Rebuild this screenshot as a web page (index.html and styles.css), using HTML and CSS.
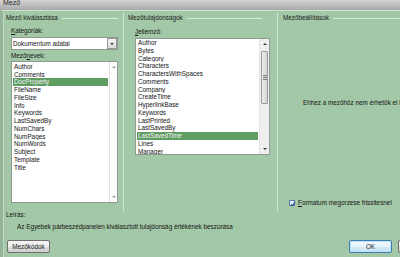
FILE: index.html
```html
<!DOCTYPE html>
<html lang="hu">
<head>
<meta charset="utf-8">
<title>Mező</title>
<link rel="stylesheet" href="styles.css">
</head>
<body>
<div class="titlebar"><span class="title">Mező</span></div>
<div class="frame">
  <div class="main">
    <section class="col col1">
      <div class="head"><span>Mező kiválasztása</span><i class="rule"></i></div>
      <div class="label lbl-kat"><u>K</u>ategóriák:</div>
      <div class="combo">
        <span class="combo-text">Dokumentum adatai</span>
        <span class="combo-btn"><i class="tri-down dark"></i></span>
      </div>
      <div class="label lbl-nev">Mező<u>n</u>evek:</div>
      <div class="listbox list-left">
        <div class="items">
          <div class="item">Author</div>
          <div class="item">Comments</div>
          <div class="item sel">DocProperty</div>
          <div class="item">FileName</div>
          <div class="item">FileSize</div>
          <div class="item">Info</div>
          <div class="item">Keywords</div>
          <div class="item">LastSavedBy</div>
          <div class="item">NumChars</div>
          <div class="item">NumPages</div>
          <div class="item">NumWords</div>
          <div class="item">Subject</div>
          <div class="item">Template</div>
          <div class="item">Title</div>
        </div>
        <div class="vscroll disabled">
          <span class="arrow"><i class="tri-up"></i></span>
          <span class="track"></span>
          <span class="arrow"><i class="tri-down"></i></span>
        </div>
      </div>
    </section>
    <section class="col col2">
      <div class="head head2"><span>Mezőtulajdonságok</span><i class="rule"></i></div>
      <div class="label lbl-jel"><u>J</u>ellemző:</div>
      <div class="listbox list-mid">
        <div class="items">
          <div class="item">Author</div>
          <div class="item">Bytes</div>
          <div class="item">Category</div>
          <div class="item">Characters</div>
          <div class="item">CharactersWithSpaces</div>
          <div class="item">Comments</div>
          <div class="item">Company</div>
          <div class="item">CreateTime</div>
          <div class="item">HyperlinkBase</div>
          <div class="item">Keywords</div>
          <div class="item">LastPrinted</div>
          <div class="item">LastSavedBy</div>
          <div class="item sel">LastSavedTime</div>
          <div class="item">Lines</div>
          <div class="item">Manager</div>
        </div>
        <div class="vscroll active">
          <span class="arrow"><i class="tri-up dark"></i></span>
          <span class="track"><span class="thumb"><i class="grip"></i></span></span>
          <span class="arrow"><i class="tri-down dark"></i></span>
        </div>
      </div>
    </section>
    <section class="col col3">
      <div class="head"><span>Mezőbeállítások</span><i class="rule"></i></div>
      <div class="nosettings">Ehhez a mezőhöz nem érhetők el beállítások</div>
      <label class="check">
        <span class="box"><svg width="6" height="6" viewBox="0 0 6 6"><path d="M1 3.2 L2.4 4.6 L5 1.2" fill="none" stroke="#1f4f8f" stroke-width="1.1"/></svg></span>
        <span><u>F</u>ormatum megorzese frissitesnel</span>
      </label>
    </section>
  </div>
  <div class="desc-label">Leírás:</div>
  <div class="desc">Az Egyebek párbeszédpanelen kiválasztott tulajdonság értékének beszúrása</div>
  <div class="buttons">
    <button class="btn">Mezőkódok</button>
    <div class="btn-group">
      <button class="btn btn-ok">OK</button>
      <button class="btn">Mégse</button>
    </div>
  </div>
</div>
</body>
</html>
```

FILE: styles.css
```css
* { box-sizing: border-box; }
html, body { margin: 0; padding: 0; }
body {
  width: 400px;
  height: 257px;
  overflow: hidden;
  background: #a3c8a7;
  font-family: "Liberation Sans", Arial, sans-serif;
  font-size: 6.35px;
  color: #141414;
}
u { text-decoration: underline; text-underline-offset: 0.5px; }

.titlebar {
  height: 10px;
  background: linear-gradient(#d2d2d2, #a9a9a9);
  padding-left: 3px;
  overflow: hidden;
}
.title {
  display: block;
  margin-top: -1.5px;
  line-height: 8px;
  font-size: 7px;
  color: #2a2a2a;
}

.frame {
  height: 247px;
  border-left: 3px solid #95b59a;
  border-top: 1px solid #cfe2d1;
  box-shadow: inset 1px 0 0 #c2dac5;
}

.main {
  display: flex;
  height: 198px;
  margin-top: 2px;
}
.col { padding-top: 1px; display: flex; flex-direction: column; }
.col1 { width: 120px; padding-left: 3px; padding-right: 5px; }
.col2 { width: 154px; padding-left: 4px; padding-right: 7px; border-left: 1px solid #d3e6d5; }
.col3 { flex: 1; padding-left: 5px; border-left: 1px solid #d3e6d5; overflow: hidden; }

.head {
  display: flex;
  align-items: center;
  gap: 4px;
  height: 8px;
  line-height: 8px;
  white-space: nowrap;
  color: #202020;
}
.head2 { margin-right: 8px; }
.rule { flex: 1; height: 1px; background: #d6e8d8; }

.label { line-height: 8px; height: 8px; white-space: nowrap; }
.col1 .label, .col1 .combo, .col1 .listbox { margin-left: 5px; }
.lbl-kat { margin-top: 5px; }
.lbl-nev { margin-top: 2px; }
.col2 .label, .col2 .listbox { margin-left: 7px; }
.lbl-jel { margin-top: 5.5px; }

.combo {
  margin-top: 2px;
  height: 13px;
  background: #fff;
  border: 1px solid #8d9a8f;
  display: flex;
  align-items: center;
}
.combo-text { flex: 1; padding-left: 1px; line-height: 8px; }
.combo-btn {
  width: 10px;
  height: 11px;
  border: 1px solid #9a9a9a;
  background: linear-gradient(#f6f6f6, #dadada);
  display: flex;
  align-items: center;
  justify-content: center;
}

.tri-down, .tri-up {
  display: block;
  width: 0; height: 0;
  border-left: 2px solid transparent;
  border-right: 2px solid transparent;
}
.tri-down { border-top: 2px solid #9a9a9a; }
.tri-up { border-bottom: 2px solid #9a9a9a; }
.tri-down.dark { border-top-color: #3a3a3a; }
.tri-up.dark { border-bottom-color: #3a3a3a; }

.listbox {
  background: #fff;
  border: 1px solid #8d9a8f;
  display: flex;
  overflow: hidden;
}
.list-left { margin-top: 1px; height: 142px; }
.list-mid { margin-top: 2.2px; height: 117.5px; }
.items { flex: 1; padding: 0.8px 1px; min-width: 0; }
.list-mid .items { padding-top: 0.4px; }
.item {
  height: 7.75px;
  line-height: 7.75px;
  padding-left: 1px;
  white-space: nowrap;
  overflow: hidden;
}
.item.sel { background: #5f9d63; color: #f2f2f2; }

.vscroll {
  display: flex;
  flex-direction: column;
  border-left: 1px solid #e2e2e2;
}
.list-left .vscroll { width: 8px; background: #fdfdfd; }
.list-mid .vscroll { width: 10px; background: #efefef; }
.arrow {
  height: 10px;
  display: flex;
  align-items: center;
  justify-content: center;
}
.track { flex: 1; }
.list-mid .track { padding-top: 2px; }
.thumb {
  display: flex;
  align-items: center;
  justify-content: center;
  margin: 0 1px;
  height: 53px;
  border: 1px solid #9a9a9a;
  border-radius: 1px;
  background: linear-gradient(90deg, #ececec, #d6d6d6);
}
.grip {
  display: block;
  width: 4px;
  height: 5px;
  background: repeating-linear-gradient(#7a7a7a 0 1px, transparent 1px 2px);
}

.nosettings {
  margin-top: 77px;
  margin-left: 20px;
  line-height: 8px;
  white-space: nowrap;
}
.check {
  display: flex;
  align-items: center;
  gap: 3px;
  margin-top: 92px;
  margin-left: 6px;
  line-height: 8px;
  height: 8px;
  white-space: nowrap;
}
.box {
  width: 6px;
  height: 6px;
  border: 0.5px solid #5a7fa8;
  background: linear-gradient(#dfe9f5, #ffffff);
  display: block;
  line-height: 0;
}
.box svg { display: block; margin: -0.5px; }

.desc-label { line-height: 8px; padding-left: 3px; }
.desc { line-height: 8px; padding-left: 14px; margin-top: 4px; white-space: nowrap; }

.buttons {
  display: flex;
  margin-top: 9px;
  margin-right: -41px;
  padding-left: 4px;
}
.btn-group { display: flex; gap: 6px; margin-left: auto; }
.btn {
  width: 43px;
  height: 13px;
  padding: 0;
  font: inherit;
  color: #1c1c1c;
  border: 1px solid #707070;
  border-radius: 2px;
  background: linear-gradient(#f4f4f4 0%, #ebebeb 50%, #dddddd 51%, #cfcfcf 100%);
  line-height: 11px;
  text-align: center;
}
.btn-ok {
  border-color: #3c7fb1;
  box-shadow: inset 0 0 0 1px #bfe2f6;
  background: linear-gradient(#f2f9fd 0%, #e6f3fb 50%, #d4ebf8 51%, #c4e3f6 100%);
}
```
